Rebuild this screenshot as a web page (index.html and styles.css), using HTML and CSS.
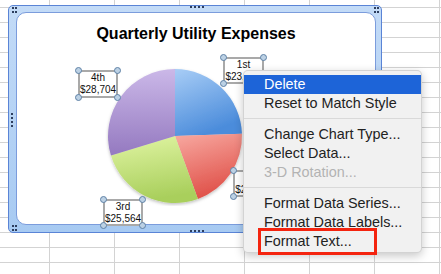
FILE: index.html
```html
<!DOCTYPE html>
<html lang="en">
<head>
  <meta charset="UTF-8" />
  <title>Chart context menu</title>
  <link rel="stylesheet" href="styles.css">
</head>
<body>

  <div class="sheet">

    <div class="chart">
      <div class="plot">
        <h1 class="title">Quarterly Utility Expenses</h1>
      </div>

      <svg class="pie" width="140" height="140" viewBox="0 0 140 140">
        <defs>
          <linearGradient id="g-blue" x1="0" y1="0" x2="0.4" y2="1">
            <stop offset="0" stop-color="#a8cdf6"/>
            <stop offset="1" stop-color="#4b8cdb"/>
          </linearGradient>
          <linearGradient id="g-red" x1="0" y1="0" x2="0.3" y2="1">
            <stop offset="0" stop-color="#f8aaa2"/>
            <stop offset="1" stop-color="#e0524a"/>
          </linearGradient>
          <linearGradient id="g-green" x1="0" y1="0" x2="0.2" y2="1">
            <stop offset="0" stop-color="#e1f5a4"/>
            <stop offset="1" stop-color="#a9cf5c"/>
          </linearGradient>
          <linearGradient id="g-purple" x1="0" y1="0" x2="0" y2="1">
            <stop offset="0" stop-color="#cbb8e8"/>
            <stop offset="1" stop-color="#9479c0"/>
          </linearGradient>
          <filter id="shade" x="-10%" y="-10%" width="120%" height="125%">
            <feDropShadow dx="0" dy="1.5" stdDeviation="1.5" flood-color="#000" flood-opacity="0.25"/>
          </filter>
        </defs>
        <g filter="url(#shade)">
          <path fill="url(#g-blue)" d="M70,70 L70,3 A67,67 0 0,1 136.96,67.66 Z"/>
          <path fill="url(#g-red)" d="M70,70 L136.96,67.66 A67,67 0 0,1 92.91,132.96 Z"/>
          <path fill="url(#g-green)" d="M70,70 L92.91,132.96 A67,67 0 0,1 5.93,89.59 Z"/>
          <path fill="url(#g-purple)" d="M70,70 L5.93,89.59 A67,67 0 0,1 70,3 Z"/>
        </g>
      </svg>

      <div class="label q4">4th<br>$28,704<span class="hd tl"></span><span class="hd tr"></span><span class="hd bl"></span><span class="hd br"></span></div>
      <div class="label q1">1st<br>$23,482<span class="hd tl"></span><span class="hd tr"></span><span class="hd bl"></span><span class="hd br"></span></div>
      <div class="label q2">2nd<br>$20,115<span class="hd tl"></span><span class="hd tr"></span><span class="hd bl"></span><span class="hd br"></span></div>
      <div class="label q3">3rd<br>$25,564<span class="hd tl"></span><span class="hd tr"></span><span class="hd bl"></span><span class="hd br"></span></div>

      <span class="grip corner g-tl"></span>
      <span class="grip corner g-tr"></span>
      <span class="grip corner g-bl"></span>
      <span class="grip row g-top"></span>
      <span class="grip row g-bottom"></span>
      <span class="grip col g-left"></span>
    </div>

    <ul class="menu">
      <li class="active">Delete</li>
      <li>Reset to Match Style</li>
      <li class="sep"></li>
      <li>Change Chart Type...</li>
      <li>Select Data...</li>
      <li class="disabled">3-D Rotation...</li>
      <li class="sep"></li>
      <li>Format Data Series...</li>
      <li>Format Data Labels...</li>
      <li>Format Text...</li>
    </ul>

    <div class="callout"></div>
  </div>

</body>
</html>
```

FILE: styles.css
```css
body {
  margin: 0;
  padding: 0;
  font-family: 'Liberation Sans', Arial, sans-serif;
}
.sheet {
  position: relative;
  width: 441px;
  height: 274px;
  overflow: hidden;
  background-color: #fff;
  background-image:
    linear-gradient(to right, #d3d3d3 1px, transparent 1px),
    linear-gradient(to bottom, #d3d3d3 1px, transparent 1px);
  background-size: 65px 100%, 100% 15px;
  background-position: 49px 0, 0 7px;
}

/* chart object */
.chart {
  position: absolute;
  left: 8px;
  top: 5px;
  width: 374px;
  height: 228px;
  box-sizing: border-box;
  padding: 6px 5px 7px 7px;
  border: 1px solid #5a84d6;
  border-radius: 5px;
  background: linear-gradient(#c3dbf7, #a7caf2);
}
.plot {
  height: 100%;
  box-sizing: border-box;
  background-color: #fff;
  border: 1px solid #7b9cdc;
  border-radius: 10px;
}
.title {
  margin: 0;
  padding-top: 11px;
  font-size: 16px;
  line-height: 20px;
  font-weight: bold;
  text-align: center;
  color: #000;
}
.pie {
  position: absolute;
  left: 96px;
  top: 60px;
}

/* data labels */
.label {
  position: absolute;
  width: 40px;
  height: 28px;
  box-sizing: border-box;
  border: 2px solid #a9a9a9;
  background-color: #fff;
  font-size: 10px;
  line-height: 12px;
  text-align: center;
  color: #111;
}
.q4 { left: 69px; top: 64px; }
.q1 { left: 214px; top: 51px; width: 41px; height: 27px; }
.q2 { left: 224px; top: 164px; height: 27px; }
.q3 { left: 94px; top: 193px; height: 27px; }
.hd {
  position: absolute;
  width: 7px;
  height: 7px;
  box-sizing: border-box;
  border: 1px solid #5f82a6;
  border-radius: 50%;
  background-color: #bcd1e4;
}
.tl { left: -5px; top: -5px; }
.tr { right: -5px; top: -5px; }
.bl { left: -5px; bottom: -5px; }
.br { right: -5px; bottom: -5px; }

/* resize grips on the frame */
.grip {
  position: absolute;
  width: 2px;
  height: 2px;
  background-color: #2c3d5e;
}
.corner { box-shadow: 3px 0 #2c3d5e, 0 4px #2c3d5e, 3px 4px #2c3d5e; }
.row { box-shadow: 4px 0 #2c3d5e, 8px 0 #2c3d5e, 12px 0 #2c3d5e; }
.col { box-shadow: 0 4px #2c3d5e, 0 8px #2c3d5e, 0 12px #2c3d5e; }
.g-tl { left: 3px; top: 1px; }
.g-tr { left: 365px; top: 1px; }
.g-bl { left: 3px; top: 219px; }
.g-top { left: 181px; top: 0; }
.g-bottom { left: 181px; top: 224px; }
.g-left { left: 2px; top: 107px; }

/* context menu */
.menu {
  position: absolute;
  left: 243px;
  top: 70px;
  width: 179px;
  height: 183px;
  box-sizing: border-box;
  margin: 0;
  padding: 4px 0 3px;
  list-style: none;
  background-color: #f1f1f1;
  border: 1px solid rgba(0,0,0,0.12);
  border-radius: 5px;
  box-shadow: 0 3px 10px rgba(0,0,0,0.22);
  font-size: 14.4px;
  color: #222;
}
.menu li {
  height: 19px;
  line-height: 19px;
  padding-left: 20px;
  white-space: nowrap;
}
.menu li.active {
  background-color: #1d64d8;
  color: #fff;
}
.menu li.disabled {
  color: #b3b3b3;
}
.menu li.sep {
  height: 12px;
  padding: 0;
  background: linear-gradient(transparent 5px, #d9d9d9 5px, #d9d9d9 6px, transparent 6px);
}

.callout {
  position: absolute;
  left: 258px;
  top: 228px;
  width: 119px;
  height: 27px;
  box-sizing: border-box;
  border: 3px solid #f4240f;
}
```
